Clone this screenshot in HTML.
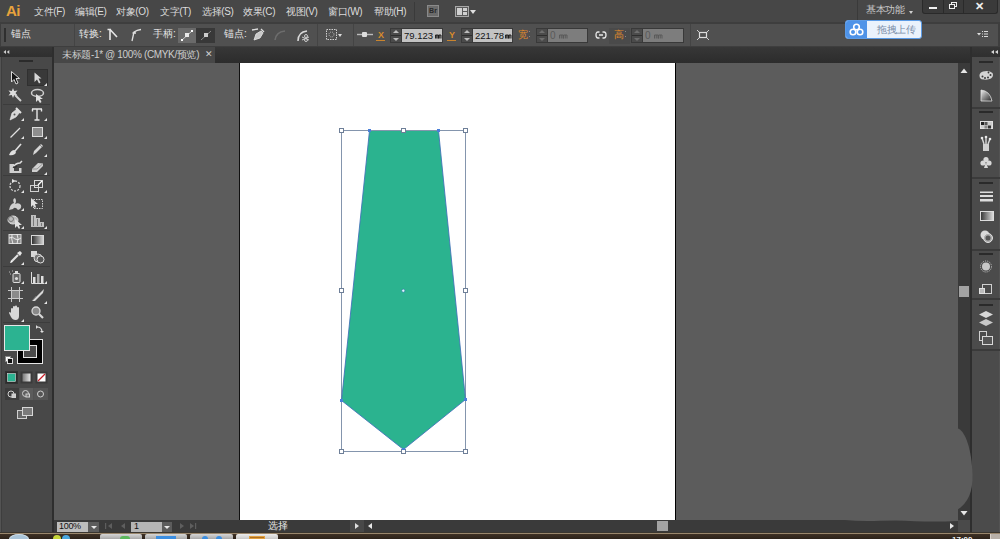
<!DOCTYPE html>
<html><head><meta charset="utf-8">
<style>
*{margin:0;padding:0;box-sizing:border-box}
html,body{width:1000px;height:539px;overflow:hidden;background:#535353;font-family:"Liberation Sans",sans-serif;color:#e0e0e0}
.a{position:absolute}
#menubar{left:0;top:0;width:1000px;height:22px;background:#474747}
#ctrl{left:0;top:22px;width:1000px;height:25px;background:#3e3e3e}
#ctrlin{left:1px;top:24px;width:997px;height:22px;background:#505050}
#lefthdr{left:0;top:47px;width:52px;height:10px;background:linear-gradient(#363636,#2f2f2f)}
#tabbar{left:52px;top:47px;width:920px;height:16px;background:linear-gradient(#373737,#2c2c2c)}
#tab{left:54px;top:47px;width:161px;height:16px;background:#474747}
#tools{left:1px;top:57px;width:51px;height:475px;background:#484848;border-left:1px solid #3e3e3e}
#toolsep{left:52px;top:47px;width:2px;height:486px;background:#2e2e2e}
#canvas{left:54px;top:63px;width:904px;height:457px;background:#5c5c5c}
#artboard{left:240px;top:63px;width:435px;height:457px;background:#ffffff}
#abshadow{left:675px;top:63px;width:1px;height:457px;background:#000}
#abshadowl{left:239px;top:63px;width:1px;height:457px;background:#111}
#vscroll{left:958px;top:63px;width:12px;height:457px;background:#3a3a3a}
#dockgap{left:970px;top:47px;width:2px;height:486px;background:#2e2e2e}
#righthdr{left:970px;top:47px;width:30px;height:10px;background:linear-gradient(#363636,#2f2f2f)}
#dock{left:972px;top:57px;width:27px;height:475px;background:#4b4b4b}
#status{left:54px;top:520px;width:904px;height:12px;background:#3a3a3a}
#taskbar{left:0;top:533px;width:1000px;height:6px;background:#3a2f25}
.mt{top:6px;font-size:10px;line-height:12px;color:#dcdcdc;white-space:nowrap;letter-spacing:-0.35px}
.ct{top:28px;font-size:10px;line-height:12px;color:#e6e6e6;white-space:nowrap}
</style></head><body>

<div id="menubar" class="a"></div>
<div id="ctrl" class="a"></div>
<div id="ctrlin" class="a"></div>
<div id="tabbar" class="a"></div>
<div id="tab" class="a"></div>
<div id="lefthdr" class="a"></div>
<div id="tools" class="a"></div>
<div id="toolsep" class="a"></div>
<div id="canvas" class="a"></div>
<div id="artboard" class="a"></div>
<div id="abshadow" class="a"></div>
<div id="abshadowl" class="a"></div>
<div id="vscroll" class="a"></div>
<div id="righthdr" class="a"></div>
<div id="dockgap" class="a"></div>
<div id="dock" class="a"></div>
<div id="status" class="a"></div>
<div id="taskbar" class="a"></div>



<svg class="a" style="left:0;top:0" width="1000" height="539">
  <path d="M957 428 C 966 431, 971.5 450, 972.5 474 C 973 492, 968 503, 957 510 Z" fill="#5c5c5c"/>
  <path d="M845 520 Q 860 521.5 880 520.8 Q 900 520 915 521.2 Q 935 522 958 521 L958 519 L845 519 Z" fill="#5c5c5c"/>
  <polygon points="369.5,130.5 438.5,130.5 465.5,399.5 403.5,449.5 341.5,400.5" fill="#2bb38f"/>
  <g fill="none" stroke="#8495ad" stroke-width="1">
   <rect x="341.5" y="130.5" width="124" height="321"/>
  </g>
  <g fill="none" stroke="#4070b8" stroke-width="1" opacity="0.85">
   <polyline points="438.5,130.5 465.5,399.5 403.5,449.5 341.5,400.5 369.5,130.5"/>
  </g>
  <g fill="#ffffff" stroke="#6e7f98" stroke-width="1">
   <rect x="339.5" y="128.5" width="4" height="4"/>
   <rect x="401.5" y="128.5" width="4" height="4"/>
   <rect x="463.5" y="128.5" width="4" height="4"/>
   <rect x="339.5" y="288.5" width="4" height="4"/>
   <rect x="463.5" y="288.5" width="4" height="4"/>
   <rect x="339.5" y="449.5" width="4" height="4"/>
   <rect x="401.5" y="449.5" width="4" height="4"/>
   <rect x="463.5" y="449.5" width="4" height="4"/>
  </g>
  <g fill="#4a7fd8">
   <rect x="368" y="129" width="3" height="3"/>
   <rect x="437" y="129" width="3" height="3"/>
   <rect x="464" y="398" width="3" height="3"/>
   <rect x="340" y="399" width="3" height="3"/>
   <rect x="402" y="448" width="3" height="2"/>
  </g>
  <circle cx="403.3" cy="290.7" r="1.6" fill="#e0f4ff" stroke="#2a7fa0" stroke-width="0.7"/>
</svg>

<!-- MENU -->
<div class="a" style="left:6px;top:2px;font:bold 15px/18px 'Liberation Sans',sans-serif;color:#e8a33c;letter-spacing:-0.5px">Ai</div>
<div class="a mt" style="left:34px">文件(F)</div>
<div class="a mt" style="left:75px">编辑(E)</div>
<div class="a mt" style="left:116px">对象(O)</div>
<div class="a mt" style="left:160px">文字(T)</div>
<div class="a mt" style="left:202px">选择(S)</div>
<div class="a mt" style="left:243px">效果(C)</div>
<div class="a mt" style="left:286px">视图(V)</div>
<div class="a mt" style="left:328px">窗口(W)</div>
<div class="a mt" style="left:374px">帮助(H)</div>
<div class="a" style="left:414px;top:2px;width:1px;height:19px;background:#3a3a3a"></div>
<div class="a" style="left:427px;top:5px;width:12px;height:12px;background:#6b6b6b;border:1px solid #8a8a8a;font:bold 7px/10px 'Liberation Sans',sans-serif;color:#2a2a2a;text-align:center">Br</div>
<div class="a" style="left:455px;top:6px;width:14px;height:11px;border:1px solid #a8a8a8;background:#5a5a5a"></div>
<div class="a" style="left:457px;top:8px;width:5px;height:7px;background:#d0d0d0"></div>
<div class="a" style="left:463px;top:8px;width:4px;height:3px;background:#d0d0d0"></div>
<div class="a" style="left:463px;top:12px;width:4px;height:3px;background:#d0d0d0"></div>
<div class="a" style="left:470px;top:10px;width:0;height:0;border-left:3px solid transparent;border-right:3px solid transparent;border-top:4px solid #e0e0e0"></div>
<div class="a" style="left:857px;top:0;width:1px;height:22px;background:#3a3a3a"></div>
<div class="a mt" style="left:866px;top:4px;color:#c8c8c8">基本功能</div>
<div class="a" style="left:909px;top:11px;width:0;height:0;border-left:2px solid transparent;border-right:2px solid transparent;border-top:3px solid #d0d0d0"></div>
<div class="a" style="left:922px;top:0;width:76px;height:14px;background:#3a3a3a;border-radius:0 0 3px 3px;border:1px solid #2a2a2a;border-top:none"></div>
<div class="a" style="left:943px;top:0;width:1px;height:13px;background:#2a2a2a"></div>
<div class="a" style="left:963px;top:0;width:1px;height:13px;background:#2a2a2a"></div>
<div class="a" style="left:929px;top:7px;width:8px;height:2px;background:#f0f0f0"></div>
<div class="a" style="left:951px;top:2px;width:6px;height:5px;border:1px solid #f0f0f0"></div>
<div class="a" style="left:949px;top:4px;width:6px;height:5px;border:1px solid #f0f0f0;background:#3a3a3a"></div>
<div class="a" style="left:975px;top:0px;font:bold 11px/13px 'Liberation Sans',sans-serif;color:#f0f0f0">✕</div>



<!-- CONTROL BAR -->
<div class="a" style="left:4px;top:28px;width:2px;height:14px;background:#2f2f2f"></div>
<div class="a ct" style="left:11px">锚点</div>
<div class="a" style="left:74px;top:24px;width:1px;height:22px;background:#444"></div>
<div class="a ct" style="left:79px">转换:</div>
<svg class="a" style="left:105px;top:27px" width="40" height="16">
 <path d="M5 2 L5 13 M2.5 2.5 L6 2.5 M5.5 3 L12 10" stroke="#e6e6e6" stroke-width="1.6" fill="none"/>
 <path d="M27 14 L29 5 Q32 3 36 2.5 M27.5 6 L31 6" stroke="#e0e0e0" stroke-width="1.3" fill="none"/>
</svg>
<div class="a ct" style="left:153px">手柄:</div>
<div class="a" style="left:178px;top:28px;width:18px;height:15px;background:#6a6a6a"></div>
<div class="a" style="left:196px;top:28px;width:19px;height:15px;background:#383838"></div>
<svg class="a" style="left:178px;top:28px" width="38" height="15">
 <path d="M4 12 L14 3" stroke="#ccc" stroke-width="1"/>
 <rect x="7" y="5" width="4" height="4" fill="#e8e8e8"/><rect x="3" y="11" width="2" height="2" fill="#fff"/><rect x="13" y="2" width="2" height="2" fill="#fff"/>
 <path d="M23 12 L33 3" stroke="#888" stroke-width="1"/>
 <rect x="26" y="5" width="4" height="4" fill="#ccc"/>
</svg>
<div class="a ct" style="left:224px">锚点:</div>
<svg class="a" style="left:250px;top:27px" width="62" height="16">
 <path d="M4 13 L6 7 L11 4 L13 6 L10 11 Z" fill="#c8c8c8" stroke="#e6e6e6" stroke-width="0.8"/>
 <path d="M2 3 L8 2 M11 2 L14 5" stroke="#ddd" stroke-width="1.3"/>
 <path d="M25 13 Q26 5 35 4" stroke="#6d6d6d" stroke-width="1.6" fill="none"/>
 <path d="M48 14 Q48 5 57 4" stroke="#d8d8d8" stroke-width="1.6" fill="none"/>
 <circle cx="56" cy="9" r="1.5" fill="none" stroke="#ccc"/><circle cx="56" cy="13" r="1.5" fill="none" stroke="#ccc"/><path d="M52 10 L59 13 M52 13 L59 10" stroke="#ccc"/>
</svg>
<div class="a" style="left:317px;top:24px;width:1px;height:22px;background:#444"></div>
<svg class="a" style="left:324px;top:27px" width="22" height="16">
 <rect x="2.5" y="2.5" width="10" height="10" fill="none" stroke="#cfcfcf" stroke-dasharray="1.5 1"/>
 <circle cx="7.5" cy="7.5" r="2.5" fill="none" stroke="#bbb" stroke-dasharray="1 1"/>
 <path d="M14 7 L18 7 L16 10 Z" fill="#ddd"/>
</svg>
<div class="a" style="left:353px;top:24px;width:1px;height:22px;background:#444"></div>
<svg class="a" style="left:356px;top:27px" width="18" height="16">
 <path d="M1 7.5 L17 7.5" stroke="#bbb" stroke-width="1.4"/><rect x="6" y="5" width="5" height="5" rx="1" fill="#ddd"/>
</svg>
<div class="a" style="left:378px;top:30px;font:bold 9px/10px 'Liberation Sans',sans-serif;color:#d98b2b">X</div>
<div class="a" style="left:376px;top:40px;width:9px;height:1px;background:#c9842e"></div>
<div class="a" style="left:390px;top:28px;width:53px;height:15px;background:#393939"></div>
<div class="a" style="left:391px;top:29px;width:10px;height:13px;background:#4b4b4b"></div>
<div class="a" style="left:391px;top:35px;width:10px;height:1px;background:#2e2e2e"></div>
<div class="a" style="left:393px;top:30px;border-left:3px solid transparent;border-right:3px solid transparent;border-bottom:3px solid #bdbdbd"></div>
<div class="a" style="left:393px;top:38px;border-left:3px solid transparent;border-right:3px solid transparent;border-top:3px solid #bdbdbd"></div>
<div class="a" style="left:402px;top:29px;width:40px;height:13px;background:#c3c3c3"></div>
<div class="a" style="left:404px;top:29px;font:9.5px/13px 'Liberation Sans',sans-serif;color:#151515;letter-spacing:0px">79.123</div>
<svg class="a" style="left:435px;top:33px" width="7" height="6"><path d="M0.5 5.5V2H3V5.5M1.75 2V5.5M3.5 5.5V2H6V5.5M4.75 2V5.5" stroke="#151515" stroke-width="0.9" fill="none"/></svg>

<div class="a" style="left:449px;top:30px;font:bold 9px/10px 'Liberation Sans',sans-serif;color:#d98b2b">Y</div>
<div class="a" style="left:447px;top:40px;width:9px;height:1px;background:#c9842e"></div>
<div class="a" style="left:461px;top:28px;width:52px;height:15px;background:#393939"></div>
<div class="a" style="left:462px;top:29px;width:10px;height:13px;background:#4b4b4b"></div>
<div class="a" style="left:462px;top:35px;width:10px;height:1px;background:#2e2e2e"></div>
<div class="a" style="left:464px;top:30px;border-left:3px solid transparent;border-right:3px solid transparent;border-bottom:3px solid #bdbdbd"></div>
<div class="a" style="left:464px;top:38px;border-left:3px solid transparent;border-right:3px solid transparent;border-top:3px solid #bdbdbd"></div>
<div class="a" style="left:473px;top:29px;width:39px;height:13px;background:#c3c3c3"></div>
<div class="a" style="left:475px;top:29px;font:9.5px/13px 'Liberation Sans',sans-serif;color:#151515;letter-spacing:0px">221.78</div>
<svg class="a" style="left:505px;top:33px" width="7" height="6"><path d="M0.5 5.5V2H3V5.5M1.75 2V5.5M3.5 5.5V2H6V5.5M4.75 2V5.5" stroke="#151515" stroke-width="0.9" fill="none"/></svg>

<div class="a" style="left:518px;top:29px;font:10px/12px 'Liberation Sans',sans-serif;color:#e08a2a">宽</div>
<div class="a" style="left:529px;top:31px;width:1px;height:1px;background:#888;box-shadow:0 5px 0 #888"></div>
<div class="a" style="left:536px;top:28px;width:52px;height:15px;background:#393939"></div>
<div class="a" style="left:537px;top:29px;width:10px;height:13px;background:#4b4b4b"></div>
<div class="a" style="left:537px;top:35px;width:10px;height:1px;background:#2e2e2e"></div>
<div class="a" style="left:539px;top:30px;border-left:3px solid transparent;border-right:3px solid transparent;border-bottom:3px solid #6e6e6e"></div>
<div class="a" style="left:539px;top:38px;border-left:3px solid transparent;border-right:3px solid transparent;border-top:3px solid #6e6e6e"></div>
<div class="a" style="left:548px;top:29px;width:39px;height:13px;background:#7d7d7d"></div>
<div class="a" style="left:550px;top:29px;font:10px/13px 'Liberation Sans',sans-serif;color:#5a5a5a">0</div>
<svg class="a" style="left:559px;top:33px" width="9" height="6"><path d="M0.5 5.5V2H4V5.5M2.25 2V5.5M4.5 5.5V2H8V5.5M6.25 2V5.5" stroke="#5a5a5a" stroke-width="1" fill="none"/></svg>

<svg class="a" style="left:595px;top:29px" width="13" height="12">
 <path d="M4.5 3 L3 3 Q1 3 1 6 Q1 9 3 9 L4.5 9 M7.5 3 L9 3 Q11 3 11 6 Q11 9 9 9 L7.5 9 M4 6 L8 6" stroke="#e6e6e6" stroke-width="1.3" fill="none"/>
</svg>
<div class="a" style="left:609px;top:28px;width:21px;height:16px;background:#4a4a4a"></div>
<div class="a" style="left:614px;top:29px;font:10px/12px 'Liberation Sans',sans-serif;color:#e08a2a">高</div>
<div class="a" style="left:625px;top:31px;width:1px;height:1px;background:#888;box-shadow:0 5px 0 #888"></div>
<div class="a" style="left:631px;top:28px;width:53px;height:15px;background:#393939"></div>
<div class="a" style="left:632px;top:29px;width:10px;height:13px;background:#4b4b4b"></div>
<div class="a" style="left:632px;top:35px;width:10px;height:1px;background:#2e2e2e"></div>
<div class="a" style="left:634px;top:30px;border-left:3px solid transparent;border-right:3px solid transparent;border-bottom:3px solid #6e6e6e"></div>
<div class="a" style="left:634px;top:38px;border-left:3px solid transparent;border-right:3px solid transparent;border-top:3px solid #6e6e6e"></div>
<div class="a" style="left:643px;top:29px;width:40px;height:13px;background:#7d7d7d"></div>
<div class="a" style="left:645px;top:29px;font:10px/13px 'Liberation Sans',sans-serif;color:#5a5a5a">0</div>
<svg class="a" style="left:654px;top:33px" width="9" height="6"><path d="M0.5 5.5V2H4V5.5M2.25 2V5.5M4.5 5.5V2H8V5.5M6.25 2V5.5" stroke="#5a5a5a" stroke-width="1" fill="none"/></svg>

<div class="a" style="left:690px;top:24px;width:1px;height:22px;background:#444"></div>
<svg class="a" style="left:695px;top:28px" width="16" height="14">
 <rect x="4.5" y="4.5" width="7" height="5" fill="none" stroke="#ddd" stroke-width="1.2"/>
 <path d="M2 2 L4 4 M14 2 L12 4 M2 12 L4 10 M14 12 L12 10" stroke="#ccc"/>
</svg>
<svg class="a" style="left:975px;top:29px" width="14" height="10">
 <path d="M2 4 L6 4 L4 6.5 Z" fill="#e0e0e0"/>
 <path d="M7 2.5 H8 M7 5 H8 M7 7.5 H8 M9 2.5 H13 M9 5 H13 M9 7.5 H13" stroke="#dadada" stroke-width="1"/>
</svg>

<!-- TOOLS -->
<svg class="a" style="left:0;top:47px" width="14" height="10"><path d="M3.5 5 L6 3 L6 7 Z M6.8 5 L9.3 3 L9.3 7 Z" fill="#d0d0d0"/></svg>
<svg class="a" style="left:0;top:57px" width="54" height="476" viewBox="0 57 54 476">
 <g fill="#2b2b2b"><rect x="19" y="60" width="14" height="2"/></g>
 <!-- selected bg -->
 <rect x="27.5" y="69.5" width="20" height="16" fill="#393939" stroke="#303030"/>
 <g fill="none" stroke="#3c3c3c">
  <path d="M3 104.5 H50 M3 175.5 H50 M3 230.5 H50 M3 266.5 H50 M3 322.5 H50"/>
 </g>
 <g fill="#e4e4e4">
  <!-- corner triangles -->
  <path d="M47 83 L47 86 L44 86 Z"/>
  <path d="M24 118 L24 121 L21 121 Z"/><path d="M47 118 L47 121 L44 121 Z"/>
  <path d="M24 136 L24 139 L21 139 Z"/><path d="M47 136 L47 139 L44 139 Z"/>
  <path d="M47 154 L47 157 L44 157 Z"/>
  <path d="M47 172 L47 175 L44 175 Z"/>
  <path d="M24 190 L24 193 L21 193 Z"/><path d="M47 190 L47 193 L44 193 Z"/>
  <path d="M24 208 L24 211 L21 211 Z"/>
  <path d="M24 226 L24 229 L21 229 Z"/><path d="M47 226 L47 229 L44 229 Z"/>
  <path d="M24 262 L24 265 L21 265 Z"/>
  <path d="M24 281 L24 284 L21 284 Z"/><path d="M47 281 L47 284 L44 284 Z"/>
  <path d="M47 301 L47 304 L44 304 Z"/>
  <path d="M24 319 L24 322 L21 322 Z"/>
 </g>
 <!-- selection arrow -->
 <path d="M11.5 71.5 L11.5 82 L14 79.5 L16 84 L18 83 L16 78.5 L19.5 78.5 Z" fill="#151515" stroke="#d8d8d8" stroke-width="1"/>
 <!-- direct selection -->
 <path d="M34.5 72.5 L34.5 82 L37 79.5 L39 83.5 L40.5 82.5 L38.5 78.5 L41.5 78.5 Z" fill="#d6d6d6"/>
 <!-- magic wand -->
 <path d="M13 88 L14.2 91 L17.5 90.5 L15.5 93 L17.5 95.5 L14.2 95 L13 98 L11.8 95 L8.5 95.5 L10.5 93 L8.5 90.5 L11.8 91 Z" fill="#dcdcdc"/>
 <path d="M15 95 L21 101" stroke="#d0d0d0" stroke-width="2"/>
 <!-- lasso -->
 <ellipse cx="37.5" cy="93" rx="6" ry="3.5" fill="none" stroke="#d0d0d0" stroke-width="1.5"/>
 <path d="M36 94 L36 102 L38 100 L40 103 L41.5 102 L40 99 L43 99 Z" fill="#e0e0e0"/>
 <!-- pen -->
 <path d="M10 120 L12 113 L17 109 L20 112 L16 117 Z" fill="#d8d8d8" stroke="#eee" stroke-width="0.6"/>
 <path d="M16 108 L21 113" stroke="#e0e0e0" stroke-width="2"/>
 <circle cx="14.5" cy="114.5" r="1" fill="#555"/>
 <!-- T -->
 <path d="M32 109 H42 M37 109 V120 M34.5 120 H39.5 M32.5 109 V111.5 M41.5 109 V111.5" stroke="#e6e6e6" stroke-width="1.4" fill="none"/>
 <!-- line -->
 <path d="M10.5 137.5 L20 128" stroke="#e0e0e0" stroke-width="1.3"/>
 <!-- rect -->
 <rect x="32.5" y="127.5" width="10" height="9" fill="#8e8e8e" stroke="#dcdcdc"/>
 <!-- brush -->
 <path d="M21 144 L15 151" stroke="#e0e0e0" stroke-width="1.6"/>
 <path d="M9 155 Q11 150 14.5 150 Q17 152 15 154 Q12 156 9 155 Z" fill="#e0e0e0"/>
 <!-- pencil -->
 <path d="M33 155 L34 151 L41 144 L43 146 L36 153 Z" fill="#d6d6d6"/>
 <path d="M40 145 L42 147" stroke="#888" stroke-width="1"/>
 <!-- blob brush -->
 <path d="M9.5 164 H14 V171 H19 V168 H21.5 V173 H9.5 Z" fill="#cfcfcf"/>
 <path d="M13 167 Q16 163 20 163 L22 161" stroke="#e0e0e0" stroke-width="1.5" fill="none"/>
 <path d="M13 167 Q15 168 17 166" stroke="#333" stroke-width="1.5" fill="none"/>
 <!-- eraser -->
 <path d="M32 169 L38 163 L43 163.5 L43 166 L37 172 L32 172 Z" fill="#d0d0d0"/>
 <path d="M32 169 L37 169 L43 163.5" stroke="#888" stroke-width="0.8" fill="none"/>
 <!-- rotate -->
 <circle cx="15" cy="186" r="5" fill="none" stroke="#cfcfcf" stroke-width="1.3" stroke-dasharray="2 1.3"/>
 <path d="M12 179 L16 181 L12 183 Z" fill="#e0e0e0"/>
 <!-- scale -->
 <rect x="30.5" y="185.5" width="8" height="6" fill="none" stroke="#cfcfcf"/>
 <rect x="34.5" y="180.5" width="8" height="7" fill="none" stroke="#d8d8d8"/>
 <path d="M38 185 L42 181" stroke="#fff" stroke-width="1.2"/>
 <!-- warp -->
 <path d="M9 210 Q10 204 14 203 Q12 199 15 198 Q17 201 15 204 Q19 202 21 205 Q22 209 18 210 Q15 206 13 209 Z" fill="#d0d0d0"/>
 <!-- free transform -->
 <rect x="33.5" y="199.5" width="9" height="9" fill="none" stroke="#cfcfcf" stroke-dasharray="1.5 1"/>
 <path d="M31 198 L31 207 L33 205 L35 208 L36 207 L35 204 L38 204 Z" fill="#e0e0e0"/>
 <!-- shape builder -->
 <ellipse cx="13" cy="220" rx="5" ry="4" fill="#bdbdbd" stroke="#ddd"/>
 <circle cx="11" cy="219" r="2.5" fill="none" stroke="#777"/>
 <path d="M15 219 L15 228 L17 226 L19 229 L20 228 L19 225 L22 225 Z" fill="#e0e0e0"/>
 <!-- perspective -->
 <path d="M31 215 L31 227 L44 227 L44 222 L40 222 L40 218 L36 218 L36 215 Z" fill="#c0c0c0"/>
 <path d="M33.5 216 V226 M37.5 219 V226 M41.5 223 V226" stroke="#666" stroke-width="0.8"/>
 <!-- mesh -->
 <rect x="9" y="234.5" width="12" height="9" fill="#8c8c8c" stroke="#d8d8d8"/>
 <path d="M9 238 Q13 236 15 239 Q18 241 21 238 M12 234 Q11 239 13 244 M17 234 Q19 238 17 244" stroke="#eee" fill="none" stroke-width="0.9"/>
 <!-- gradient -->
 <defs><linearGradient id="gg" x1="0" x2="1"><stop offset="0" stop-color="#2a2a2a"/><stop offset="1" stop-color="#d8d8d8"/></linearGradient>
 <linearGradient id="gv" x1="0" x2="1"><stop offset="0" stop-color="#777"/><stop offset="1" stop-color="#e8e8e8"/></linearGradient></defs>
 <rect x="31.5" y="235.5" width="12" height="9" fill="url(#gg)" stroke="#d8d8d8"/>
 <!-- eyedropper -->
 <path d="M11 262 L18 255" stroke="#e0e0e0" stroke-width="2.2"/>
 <path d="M17 253 L20 251 L22 253 L20 256 Z" fill="#e6e6e6"/>
 <path d="M10.5 263 L12 261" stroke="#fff" stroke-width="1"/>
 <!-- blend -->
 <rect x="31" y="251" width="6" height="6" fill="#d8d8d8"/>
 <circle cx="38" cy="258" r="4" fill="#777" stroke="#d8d8d8"/>
 <circle cx="40.5" cy="259.5" r="3.5" fill="#555" stroke="#e0e0e0"/>
 <!-- symbol sprayer -->
 <rect x="13" y="273.5" width="7" height="9" rx="1" fill="#666" stroke="#ddd"/>
 <circle cx="16.5" cy="278.5" r="1.6" fill="#ddd"/>
 <rect x="15" y="271" width="3" height="2" fill="#ddd"/>
 <path d="M9 272 h1 M10 274 h1 M12 271 h1" stroke="#bbb"/>
 <!-- graph -->
 <path d="M31.5 272 V283.5 H44" stroke="#ddd" fill="none"/>
 <rect x="33" y="277" width="2.5" height="6" fill="#e0e0e0"/><rect x="37" y="274" width="2.5" height="9" fill="#aaa"/><rect x="41" y="276" width="2.5" height="7" fill="#e0e0e0"/>
 <!-- artboard -->
 <rect x="11.5" y="290.5" width="8" height="8" fill="#8a8a8a" stroke="#ccc"/>
 <path d="M8 290.5 H23 M8 298.5 H23 M11.5 287 V302 M19.5 287 V302" stroke="#c8c8c8" fill="none"/>
 <!-- slice -->
 <path d="M32 301 L41 292 L44 289 L43 293 L35 301 Z" fill="#d8d8d8"/>
 <path d="M32 301 L36 296" stroke="#888" stroke-width="0.6"/>
 <!-- hand -->
 <path d="M11 313 L11 309 Q11 308 12 308 Q13 308 13 309 L13 312 L13 307 Q13 306 14 306 Q15 306 15 307 L15 312 L15 306.5 Q15 305.5 16 305.5 Q17 305.5 17 306.5 L17 312 L17 308 Q17 307 18 307 Q19 307 19 308 L19 316 Q19 320 15.5 320 Q12.5 320 11 317 L9 313 Q9 312 10 312 Z" fill="#d8d8d8"/>
 <!-- zoom -->
 <circle cx="36" cy="311" r="4" fill="#8a8a8a" stroke="#d8d8d8" stroke-width="1.3"/>
 <path d="M39 314 L43 318" stroke="#d8d8d8" stroke-width="2.2"/>
 <!-- fill / stroke -->
 <rect x="17.5" y="339.5" width="25" height="24" fill="#000" stroke="#e6e6e6"/>
 <rect x="23.5" y="345.5" width="13" height="12" fill="#4b4b4b" stroke="#e6e6e6"/>
 <rect x="4.5" y="325.5" width="25" height="25" fill="#2cb391" stroke="#e6e6e6"/>
 <path d="M37 327 Q42 327 42 332" stroke="#ddd" fill="none" stroke-width="1.2"/>
 <path d="M36 325 L38 327 L36 329 Z M40 331 L42 333 L44 331 Z" fill="#ddd"/>
 <rect x="5.5" y="356.5" width="5" height="5" fill="#fff" stroke="#888"/>
 <rect x="7.5" y="358.5" width="5" height="5" fill="#111" stroke="#ddd"/>
 <!-- color modes -->
 <rect x="5.5" y="371.5" width="12" height="12" fill="#2a2a2a" stroke="#333"/>
 <rect x="7.5" y="373.5" width="8" height="8" fill="#2cb391" stroke="#ddd" stroke-width="0.6"/>
 <rect x="20.5" y="371.5" width="12" height="12" fill="#3a3a3a"/>
 <rect x="22.5" y="373.5" width="8" height="8" fill="url(#gv)"/>
 <rect x="35.5" y="371.5" width="12" height="12" fill="#3a3a3a"/>
 <rect x="37.5" y="373.5" width="8" height="8" fill="#fff"/>
 <path d="M38 381 L45 374" stroke="#c8202a" stroke-width="1.3"/>
 <!-- draw modes -->
 <rect x="5" y="388" width="14" height="12" fill="#3c3c3c"/>
 <rect x="19.5" y="388" width="14" height="12" fill="#5c5c5c"/>
 <rect x="34" y="388" width="14" height="12" fill="#555"/>
 <g fill="none" stroke="#d0d0d0" stroke-width="1">
  <circle cx="11" cy="394" r="3"/><rect x="12" y="394" width="3.5" height="3.5" fill="#ccc"/>
  <circle cx="25.5" cy="393.5" r="3"/><rect x="26" y="394" width="3.5" height="3" fill="#777"/>
  <circle cx="40.5" cy="394" r="3"/>
 </g>
 <!-- screen mode -->
 <rect x="17.5" y="410.5" width="9" height="8" fill="#666" stroke="#cfcfcf"/>
 <rect x="22.5" y="407.5" width="10" height="8" fill="#7a7a7a" stroke="#d8d8d8"/>
</svg>

<!-- DOCK -->
<svg class="a" style="left:955px;top:47px" width="45" height="486" viewBox="955 47 45 486">
 <defs>
  <linearGradient id="dg1" x1="0" y1="0" x2="1" y2="1"><stop offset="0" stop-color="#f0f0f0"/><stop offset="1" stop-color="#222"/></linearGradient>
  <linearGradient id="dg2" x1="0" x2="1"><stop offset="0" stop-color="#333"/><stop offset="1" stop-color="#e0e0e0"/></linearGradient>
 </defs>
 <!-- collapse arrows -->
 <path d="M991 52 L994 50 L994 54 Z M995 52 L998 50 L998 54 Z" fill="#d8d8d8"/>
 <!-- v scrollbar up arrow -->
 <path d="M960.5 73 L964 68.5 L967.5 73 Z" fill="#e6e6e6"/>
 <!-- thumb -->
 <rect x="959" y="286" width="10" height="11" fill="#a3a3a3"/>
 <!-- down arrow -->
 <path d="M960.5 511 L967.5 511 L964 515.5 Z" fill="#e6e6e6"/>
 <!-- group separators -->
 <g fill="#3a3a3a">
  <rect x="972" y="107" width="28" height="2"/>
  <rect x="972" y="177" width="28" height="2"/>
  <rect x="972" y="249" width="28" height="2"/>
  <rect x="972" y="298" width="28" height="2"/>
  <rect x="972" y="349" width="28" height="2"/>
 </g>
 <!-- grips -->
 <g fill="#2a2a2a">
  <rect x="979" y="61" width="14" height="2"/>
  <rect x="979" y="111" width="14" height="2"/>
  <rect x="979" y="182" width="14" height="2"/>
  <rect x="979" y="253" width="14" height="2"/>
  <rect x="979" y="304" width="14" height="2"/>
 </g>
 <!-- palette -->
 <path d="M980 78 Q978 73 983 71.5 Q989 70 992.5 73 Q994 76 991 78.5 Q988 80 984 79.5 Q981 79.5 980 78 Z" fill="#d4d4d4"/>
 <g fill="#3a3a3a"><circle cx="982.5" cy="76.5" r="1"/><circle cx="985" cy="78" r="1"/><circle cx="988" cy="77.5" r="1"/><circle cx="990.5" cy="75" r="1"/><circle cx="988.5" cy="72.5" r="0.9"/></g>
 <!-- gradient triangle -->
 <path d="M981 90 Q990 91 992 101 L981 101 Z" fill="url(#dg1)" stroke="#e0e0e0" stroke-width="0.8"/>
 <!-- swatches -->
 <rect x="980.5" y="121.5" width="12" height="7" fill="#ccc" stroke="#e0e0e0"/>
 <g fill="#222"><rect x="981" y="122" width="3" height="3"/><rect x="984.5" y="122" width="3" height="3" fill="#555"/><rect x="988" y="125.5" width="3" height="3" fill="#333"/><rect x="984.5" y="125.5" width="3" height="3" fill="#888"/></g>
 <!-- brushes -->
 <rect x="983" y="144" width="6" height="7" fill="#cfcfcf"/>
 <path d="M984 144 L982 138 M986 144 L986 137 M988 144 L990 139" stroke="#d8d8d8" stroke-width="1.4"/>
 <circle cx="982" cy="138" r="1.3" fill="#e8e8e8"/><circle cx="986" cy="137" r="1.3" fill="#e8e8e8"/><circle cx="990" cy="139" r="1.3" fill="#e8e8e8"/>
 <!-- club -->
 <circle cx="986" cy="159.5" r="2.6" fill="#d8d8d8"/><circle cx="983" cy="163" r="2.6" fill="#d8d8d8"/><circle cx="989" cy="163" r="2.6" fill="#d8d8d8"/>
 <path d="M986 162 L984 168 L988 168 Z" fill="#d8d8d8"/>
 <!-- stroke lines -->
 <rect x="980" y="191.5" width="13" height="1.5" fill="#ddd"/>
 <rect x="980" y="195" width="13" height="2" fill="#ddd"/>
 <rect x="980" y="199" width="13" height="2.5" fill="#ddd"/>
 <!-- gradient -->
 <rect x="980.5" y="211.5" width="13" height="9" fill="url(#dg2)" stroke="#ddd"/>
 <!-- transparency -->
 <circle cx="985" cy="235" r="4.5" fill="#d8d8d8"/>
 <circle cx="988" cy="238" r="4.5" fill="#aaa" stroke="#e0e0e0"/>
 <circle cx="988" cy="238" r="2.5" fill="#555"/>
 <!-- appearance -->
 <circle cx="986" cy="266.5" r="5.5" fill="none" stroke="#bbb" stroke-dasharray="1.2 1" stroke-width="1"/>
 <circle cx="986" cy="266.5" r="4" fill="#c8c8c8"/>
 <!-- graphic styles -->
 <rect x="982.5" y="284.5" width="9" height="9" fill="none" stroke="#d0d0d0"/>
 <rect x="979.5" y="288.5" width="5" height="5" fill="#bbb" stroke="#e0e0e0"/>
 <!-- layers -->
 <path d="M986 319 L993 322.5 L986 326 L979 322.5 Z" fill="#c8c8c8"/>
 <path d="M986 311 L993 314.5 L986 318 L979 314.5 Z" fill="#d8d8d8"/>
 <!-- artboards -->
 <rect x="979.5" y="331.5" width="7" height="9" fill="none" stroke="#cfcfcf"/>
 <rect x="982.5" y="336.5" width="10" height="8" fill="#555" stroke="#d8d8d8"/>
</svg>

<!-- TAB -->
<div class="a" style="left:62px;top:49px;font:10px/12px 'Liberation Sans',sans-serif;color:#cdcdcd;white-space:nowrap;letter-spacing:-0.35px">未标题-1* @ 100% (CMYK/预览)</div>
<div class="a" style="left:205px;top:48px;font:9px/12px 'Liberation Sans',sans-serif;color:#d0d0d0">✕</div>
<!-- STATUS -->
<div class="a" style="left:57px;top:522px;width:31px;height:10px;background:#bdbdbd"></div>
<div class="a" style="left:59px;top:521px;font:9px/11px 'Liberation Sans',sans-serif;color:#111;letter-spacing:-0.3px">100%</div>
<div class="a" style="left:88px;top:522px;width:11px;height:10px;background:#5c5c5c"></div>
<div class="a" style="left:91px;top:526px;border-left:3px solid transparent;border-right:3px solid transparent;border-top:3px solid #e8e8e8"></div>
<div class="a" style="left:131px;top:522px;width:31px;height:10px;background:#b5b5b5"></div>
<div class="a" style="left:134px;top:521px;font:9px/11px 'Liberation Sans',sans-serif;color:#111">1</div>
<div class="a" style="left:162px;top:522px;width:10px;height:10px;background:#5c5c5c"></div>
<div class="a" style="left:164px;top:526px;border-left:3px solid transparent;border-right:3px solid transparent;border-top:3px solid #e8e8e8"></div>
<svg class="a" style="left:100px;top:520px" width="100" height="12">
 <g fill="#5e5e5e">
  <rect x="5" y="3" width="1.2" height="6"/><path d="M12 3 L8 6 L12 9 Z"/>
  <path d="M25 3 L21 6 L25 9 Z"/>
  <path d="M80 3 L84 6 L80 9 Z"/>
  <path d="M90 3 L94 6 L90 9 Z"/><rect x="95" y="3" width="1.2" height="6"/>
 </g>
</svg>
<div class="a" style="left:268px;top:520px;font:10px/12px 'Liberation Sans',sans-serif;color:#e8e8e8">选择</div>
<div class="a" style="left:350px;top:520px;width:14px;height:12px;background:#484848"></div>
<div class="a" style="left:355px;top:523px;border-top:3px solid transparent;border-bottom:3px solid transparent;border-left:4px solid #e0e0e0"></div>
<div class="a" style="left:368px;top:523px;border-top:3px solid transparent;border-bottom:3px solid transparent;border-right:4px solid #e8e8e8"></div>
<div class="a" style="left:657px;top:521px;width:11px;height:10px;background:#a3a3a3"></div>
<div class="a" style="left:950px;top:523px;border-top:3px solid transparent;border-bottom:3px solid transparent;border-left:4px solid #e8e8e8"></div>
<div class="a" style="left:958px;top:520px;width:12px;height:12px;background:#4a4a4a"></div>
<!-- POPUP -->
<div class="a" style="left:845px;top:20px;width:77px;height:19px;background:#eaf2fc;border:1px solid #5b9be6;border-radius:3px;overflow:hidden">
 <div class="a" style="left:0;top:0;width:21px;height:17px;background:#4e93e8"></div>
</div>
<svg class="a" style="left:846px;top:21px" width="21" height="17">
 <g fill="none" stroke="#fff" stroke-width="1.6"><circle cx="10.5" cy="6" r="2.8"/><circle cx="7" cy="11" r="2.8"/><circle cx="14" cy="11" r="2.8"/></g>
</svg>
<div class="a" style="left:877px;top:24px;font:9.5px/11px 'Liberation Sans',sans-serif;color:#7b8da8;letter-spacing:-0.5px">拖拽上传</div>

<!-- TASKBAR -->
<div class="a" style="left:0;top:532px;width:1000px;height:1px;background:#3a3630"></div>
<div class="a" style="left:0;top:533px;width:1000px;height:1px;background:#9a876c"></div>
<div class="a" style="left:0;top:534px;width:1000px;height:5px;background:linear-gradient(#3f3125,#2c2219)"></div>
<div class="a" style="left:9px;top:534px;width:20px;height:10px;border-radius:50%;background:#a9c4d8;border:1px solid #d0e0ea"></div>
<div class="a" style="left:53px;top:535px;width:8px;height:8px;border-radius:50%;background:#c8d83a"></div>
<div class="a" style="left:62px;top:535px;width:8px;height:8px;border-radius:50%;background:#4aa8e0"></div>
<div class="a" style="left:100px;top:534px;width:42px;height:5px;background:linear-gradient(#d6d6d6,#a8a8a8);border-radius:2px 2px 0 0"></div>
<div class="a" style="left:145px;top:534px;width:42px;height:5px;background:linear-gradient(#d6d6d6,#a8a8a8);border-radius:2px 2px 0 0"></div>
<div class="a" style="left:190px;top:534px;width:43px;height:5px;background:linear-gradient(#d6d6d6,#a8a8a8);border-radius:2px 2px 0 0"></div>
<div class="a" style="left:236px;top:534px;width:42px;height:5px;background:linear-gradient(#ececec,#c8c8c8);border-radius:2px 2px 0 0"></div>
<div class="a" style="left:120px;top:536px;width:10px;height:3px;background:#5cb85c;border-radius:3px 3px 0 0"></div>
<div class="a" style="left:156px;top:536px;width:20px;height:3px;background:#3b8ee0"></div>
<div class="a" style="left:202px;top:536px;width:6px;height:3px;background:#3b8ee0;border-radius:3px 3px 0 0"></div>
<div class="a" style="left:216px;top:536px;width:6px;height:3px;background:#3b8ee0;border-radius:3px 3px 0 0"></div>
<div class="a" style="left:249px;top:536px;width:16px;height:3px;background:#b07020;border:1px solid #e0a040"></div>
<div class="a" style="left:952px;top:536px;font:bold 8px/8px 'Liberation Sans',sans-serif;color:#f0f0f0">17:00</div>
<div class="a" style="left:990px;top:534px;width:10px;height:5px;background:#b8b0a8;border-left:1px solid #d8d0c8"></div>

</body></html>
